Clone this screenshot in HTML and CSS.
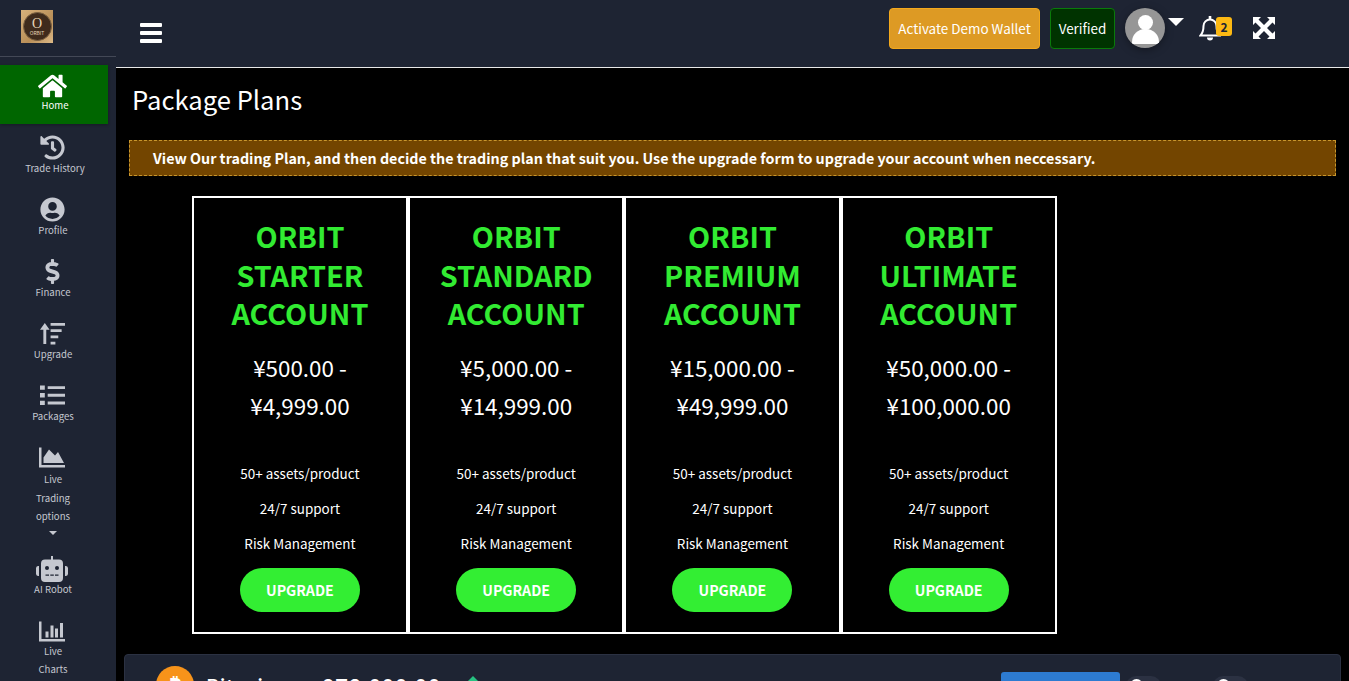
FILE: index.html
```html
<!DOCTYPE html>
<html lang="en">
<head>
<meta charset="utf-8">
<title>Package Plans</title>
<link rel="stylesheet" href="styles.css">
</head>
<body>
<div class="app">
  <aside class="sidebar">
    <div class="brand">
      <div class="logo"><div class="coin"><span class="coin-o">O</span><span class="coin-t">ORBIT</span></div></div>
    </div>
    <nav class="nav">
      <a class="nav-item active">
        <svg class="ico home" viewBox="0 0 576 512"><path fill="currentColor" d="M280.4 148.3 96 300.1V464a16 16 0 0 0 16 16l112-.3a16 16 0 0 0 16-16V368a16 16 0 0 1 16-16h64a16 16 0 0 1 16 16v95.6a16 16 0 0 0 16 16l112 .4a16 16 0 0 0 16-16V300L295.7 148.3a12.2 12.2 0 0 0-15.3 0zM571.6 251.5 488 182.600V44a12 12 0 0 0-12-12h-56a12 12 0 0 0-12 12v72.600L318.500 43a48 48 0 0 0-61 0L4.300 251.500a12 12 0 0 0-1.600 16.900l25.500 31a12 12 0 0 0 16.900 1.600l235.200-193.700a12.200 12.200 0 0 1 15.300 0L530.900 301a12 12 0 0 0 16.900-1.600l25.500-31a12 12 0 0 0-1.700-16.900z"/></svg>
        <span class="shifted">Home</span>
      </a>
      <a class="nav-item">
        <svg class="ico" viewBox="0 0 512 512"><path fill="currentColor" d="M504 255.500c.3 136.600-111.200 248.400-247.800 248.500-59 0-113.200-20.500-155.800-54.900-11.100-8.900-11.900-25.500-1.800-35.600l11.300-11.300c8.600-8.600 22.400-9.600 31.900-2C173.100 425.100 212.800 440 256 440c101.700 0 184-82.300 184-184 0-101.700-82.300-184-184-184-48.800 0-93.100 19-126.100 49.900l50.800 50.800c10.100 10.100 2.900 27.300-11.300 27.300H24c-8.800 0-16-7.200-16-16V38.600c0-14.300 17.200-21.400 27.300-11.300l49.400 49.400C129.200 34.100 189.600 8 256 8c136.700 0 247.700 110.800 248 247.500zm-180.900 78.800 9.800-12.600c8.100-10.500 6.300-25.500-4.200-33.700L288 256.300V152c0-13.300-10.700-24-24-24h-16c-13.300 0-24 10.700-24 24v135.700l65.400 50.900c10.500 8.100 25.500 6.200 33.700-4.300z"/></svg>
        <span class="shifted-sm">Trade History</span>
      </a>
      <a class="nav-item">
        <svg class="ico" viewBox="0 0 496 512"><path fill="currentColor" d="M248 8C111 8 0 119 0 256s111 248 248 248 248-111 248-248S385 8 248 8zm0 96c48.600 0 88 39.400 88 88s-39.400 88-88 88-88-39.400-88-88 39.400-88 88-88zm0 344c-58.700 0-111.300-26.600-146.500-68.200 18.800-35.400 55.600-59.800 98.500-59.800 2.400 0 4.800.4 7.100 1.100 13 4.200 26.600 6.900 40.900 6.900 14.300 0 28-2.700 40.900-6.900 2.300-.7 4.700-1.100 7.100-1.100 42.900 0 79.700 24.400 98.500 59.800C359.300 421.400 306.700 448 248 448z"/></svg>
        <span>Profile</span>
      </a>
      <a class="nav-item">
        <svg class="ico" viewBox="0 0 288 512"><path fill="currentColor" d="M209.200 233.400l-108-31.600C88.700 198.200 80 186.500 80 173.500c0-16.300 13.200-29.500 29.500-29.500h66.300c12.200 0 24.200 3.700 34.200 10.500 6.100 4.100 14.300 3.100 19.500-2l34.800-34c7.100-6.900 6.100-18.400-1.800-24.500C238 74.800 207.400 64.100 176 64V16c0-8.800-7.200-16-16-16h-32c-8.800 0-16 7.200-16 16v48h-2.500C45.800 64-5.400 118.700.5 183.600c4.200 46.100 39.400 83.600 83.800 96.600l102.500 30c12.500 3.700 21.200 15.300 21.200 28.300 0 16.300-13.200 29.500-29.500 29.500h-66.300C100 368 88 364.300 78 357.500c-6.100-4.100-14.300-3.100-19.500 2l-34.800 34c-7.100 6.900-6.100 18.400 1.800 24.500 24.500 19.200 55.100 29.900 86.500 30v48c0 8.800 7.200 16 16 16h32c8.800 0 16-7.200 16-16v-48.200c46.600-.9 90.300-28.600 105.700-72.700 21.500-61.600-14.600-124.800-72.500-141.700z"/></svg>
        <span>Finance</span>
      </a>
      <a class="nav-item">
        <svg class="ico" viewBox="0 0 26 24"><path fill="currentColor" d="M5 1 0 8h3.500v15h3V8H10zM11 1h15v3H11zM11 7.500h11.500v3H11zM11 14h8v3h-8zM11 20.500h5v3h-5z"/></svg>
        <span>Upgrade</span>
      </a>
      <a class="nav-item">
        <svg class="ico" viewBox="0 0 26 21"><path fill="currentColor" d="M0 0h5v4.500H0zM8 .8h18v3H8zM0 8h5v4.500H0zM8 8.800h18v3H8zM0 16h5v4.500H0zM8 16.800h18v3H8z"/></svg>
        <span>Packages</span>
      </a>
      <a class="nav-item multi">
        <svg class="ico" viewBox="0 0 26 20"><path fill="currentColor" d="M0 0h2.500v17.500H26V20H0zM4.500 15.500V10L10 2l6 6 3-3.500 6 11z"/></svg>
        <span>Live</span><span>Trading</span><span>options</span>
        <i class="caret"></i>
      </a>
      <a class="nav-item robot">
        <svg class="ico" viewBox="0 0 32 26"><path fill="currentColor" d="M15 0h2v3.500h6a4 4 0 0 1 4 4V22a4 4 0 0 1-4 4H9a4 4 0 0 1-4-4V7.500a4 4 0 0 1 4-4h6zM0 12a2.500 2.500 0 0 1 3-2v10a2.500 2.500 0 0 1-3-2zM29 10a2.500 2.500 0 0 1 3 2v6a2.500 2.500 0 0 1-3 2z"/><circle cx="11" cy="12" r="2" fill="#1e2433"/><circle cx="21" cy="12" r="2" fill="#1e2433"/><path fill="#1e2433" d="M9.500 18.500h3.500v1.300H9.500zM14.300 18.500h3.500v1.300h-3.500zM19 18.500h3.500v1.300H19z"/></svg>
        <span>AI Robot</span>
      </a>
      <a class="nav-item multi charts">
        <svg class="ico" viewBox="0 0 26 20"><path fill="currentColor" d="M0 0h2.500v17.500H26V20H0zM6.500 10h3v6h-3zM11.500 4h3v12h-3zM16 7h3v9h-3zM21 1.500h3V16h-3z"/></svg>
        <span>Live</span><span>Charts</span>
      </a>
    </nav>
  </aside>
  <div class="main">
    <header class="topbar">
      <div class="burger"><b></b><b></b><b></b></div>
      <div class="top-actions">
        <a class="btn-demo">Activate Demo Wallet</a>
        <a class="btn-verified">Verified</a>
        <div class="avatar"><i class="av-head"></i><i class="av-body"></i></div>
        <i class="av-caret"></i>
        <div class="bell">
          <svg viewBox="0 0 22 25"><path fill="none" stroke="#fff" stroke-width="2" d="M11 3.500a6.500 6.500 0 0 0-6.500 6.500c0 5.500-1.300 7.500-3 9.500h19c-1.700-2-3-4-3-9.500A6.500 6.500 0 0 0 11 3.500z"/><path fill="#fff" d="M9.700 0h2.600v3H9.700zM8 21.500h6a3 3 0 0 1-6 0z"/></svg>
          <span class="badge">2</span>
        </div>
        <svg class="expand" viewBox="0 0 22 22"><path fill="#fff" d="M0 0h8L5.500 2.500 11 8l5.500-5.500L14 0h8v8l-2.500-2.500L14 11l5.500 5.500L22 14v8h-8l2.500-2.500L11 14l-5.500 5.500L8 22H0v-8l2.500 2.500L8 11 2.500 5.500 0 8z"/></svg>
      </div>
    </header>
    <main class="content">
      <h1 class="page-title">Package Plans</h1>
      <div class="notice">View Our trading Plan, and then decide the trading plan that suit you. Use the upgrade form to upgrade your account when neccessary.</div>
      <section class="plans">
        <article class="plan">
          <h2>ORBIT STARTER ACCOUNT</h2>
          <p class="price">¥500.00 - ¥4,999.00</p>
          <ul><li>50+ assets/product</li><li>24/7 support</li><li>Risk Management</li></ul>
          <a class="upgrade">UPGRADE</a>
        </article>
        <article class="plan">
          <h2>ORBIT STANDARD ACCOUNT</h2>
          <p class="price">¥5,000.00 - ¥14,999.00</p>
          <ul><li>50+ assets/product</li><li>24/7 support</li><li>Risk Management</li></ul>
          <a class="upgrade">UPGRADE</a>
        </article>
        <article class="plan">
          <h2>ORBIT PREMIUM ACCOUNT</h2>
          <p class="price">¥15,000.00 - ¥49,999.00</p>
          <ul><li>50+ assets/product</li><li>24/7 support</li><li>Risk Management</li></ul>
          <a class="upgrade">UPGRADE</a>
        </article>
        <article class="plan">
          <h2>ORBIT ULTIMATE ACCOUNT</h2>
          <p class="price">¥50,000.00 - ¥100,000.00</p>
          <ul><li>50+ assets/product</li><li>24/7 support</li><li>Risk Management</li></ul>
          <a class="upgrade">UPGRADE</a>
        </article>
      </section>
      <section class="ticker">
        <div class="btc"><span>₿</span></div>
        <div class="coin-name">Bitcoin</div>
        <div class="coin-price">978,000.00</div>
        <i class="up"></i>
        <div class="ticker-right">
          <a class="blue-btn"></a>
          <i class="toggle"></i>
          <i class="toggle"></i>
        </div>
      </section>
    </main>
  </div>
</div>
</body>
</html>
```
FILE: styles.css
```css
* { box-sizing: border-box; }
html, body { margin: 0; height: 100%; overflow: hidden; background: #000; }
body { font-family: "Noto Sans CJK SC", "Noto Sans", sans-serif; color: #fff; }
.app { display: flex; height: 681px; overflow: hidden; }
.sidebar { width: 116px; flex: none; background: #1e2433; overflow: hidden; }
.brand { height: 57px; border-bottom: 1px solid #434856; padding: 10px 0 0 21px; }
.logo { width: 32px; height: 33px; background: linear-gradient(135deg, #d8b27c, #b98f58 60%, #dcb987); display: flex; align-items: center; justify-content: center; }
.coin { width: 29px; height: 29px; border-radius: 50%; background: #3f2b1c; border: 1px solid #7b6142; display: flex; flex-direction: column; align-items: center; justify-content: center; color: #e6d6b8; }
.coin-o { font: 400 14px/12px "Liberation Serif", serif; }
.coin-t { font-size: 5px; line-height: 6px; }
.nav { display: flex; flex-direction: column; padding-top: 8px; }
.nav-item { width: 108px; display: flex; flex-direction: column; align-items: center; color: #c5c8d0; font-size: 9.600px; line-height: 14px; padding: 7px 2px 0 0; height: 62px; }
.nav-item .ico { width: 25px; height: 25px; margin: 0 2px 1px 0; }
.shifted { margin-left: 6px; }
.shifted-sm { margin-left: 4px; }
.nav-item.active { background: #006600; color: #fff; height: 59px; padding: 8px 4px 0 0; margin-bottom: 4px; box-shadow: 0 1px 3px rgba(0,0,0,.3); }
.nav-item.active .ico { width: 29px; height: 26px; margin: 0 0 -1px 0; }
.nav-item.multi { height: auto; padding-top: 9px; }
.nav-item.multi .ico { width: 26px; height: 21px; margin-bottom: 2px; }
.nav-item.multi span { line-height: 18.500px; }
.caret { width: 0; height: 0; border: 4px solid transparent; border-top: 4px solid #c5c8d0; border-bottom: 0; margin-top: 5px; }
.nav-item.robot { margin-top: 21px; height: 60px; padding-top: 0; }
.nav-item.robot .ico { width: 32px; height: 26px; margin: 0 2px 0 0; }
.nav-item.charts { padding-top: 5px; }
.nav-item.charts .ico { margin-bottom: 0; }
.main { flex: 1; min-width: 0; display: flex; flex-direction: column; }
.topbar { height: 68px; flex: none; background: #1e2433; border-bottom: 1px solid #e8e8e8; display: flex; align-items: center; padding: 0 74px 0 24px; justify-content: space-between; }
.burger { display: flex; flex-direction: column; gap: 4px; width: 22px; margin-top: -1px; }
.burger b { height: 4px; background: #fff; border-radius: 1px; }
.top-actions { display: flex; align-items: center; margin-top: -11px; }
.btn-demo { width: 151px; height: 41px; background: #dd9a24; border: 1px solid #f4a91c; border-radius: 4px; font-size: 13.440px; display: flex; align-items: center; justify-content: center; }
.btn-verified { width: 65px; height: 41px; margin-left: 10px; background: #003300; border: 1px solid #0a7a0a; border-radius: 4px; font-size: 13.440px; display: flex; align-items: center; justify-content: center; }
.avatar { width: 40px; height: 40px; margin-left: 10px; border-radius: 50%; background: #969696; position: relative; overflow: hidden; box-shadow: 0 2px 8px rgba(0,0,0,.35); }
.av-head { position: absolute; left: 13px; top: 7px; width: 15px; height: 15px; border-radius: 50%; background: #fff; }
.av-body { position: absolute; left: 7px; top: 21px; width: 27px; height: 15px; border-radius: 13px 13px 0 0; background: #fff; }
.av-caret { width: 0; height: 0; border: 8px solid transparent; border-top: 8px solid #fff; border-bottom: 0; margin: -12px 0 0 3px; }
.bell { position: relative; width: 22px; height: 25px; margin-left: 15px; }
.bell svg { width: 22px; height: 25px; display: block; }
.badge { position: absolute; left: 17px; top: 1px; width: 16px; height: 19px; background: #fdb913; border-radius: 3px; color: #1e2433; font-size: 12px; font-weight: 700; line-height: 19px; text-align: center; }
.expand { width: 22px; height: 22px; margin-left: 32px; }
.content { flex: 1; min-height: 0; padding: 0 8px 0 8px; }
.page-title { margin: 13px 0 0 8px; font-size: 25.600px; font-weight: 400; line-height: 36px; height: 41px; }
.notice { margin: 18px 5px 0 5px; height: 36px; background: #734500; border: 1px dashed #c8962c; font-size: 14.300px; font-weight: 700; line-height: 34px; padding-left: 23px; white-space: nowrap; }
.plans { display: flex; margin: 20px 0 0 67.800px; }
.plan { width: 216.250px; height: 438px; border: 2px solid #fff; background: #000; text-align: center; padding: 19px 30px 0; }
.plan h2 { margin: 0 -15px; font-size: 28.800px; font-weight: 700; line-height: 38.500px; color: #32eb32; }
.price { margin: 15px -15px 0; font-size: 22.400px; line-height: 38px; padding: 0 20px; height: 76px; }
.plan ul { list-style: none; margin: 32px 0 0; padding: 0; font-size: 13.440px; line-height: 35px; }
.upgrade { display: flex; align-items: center; justify-content: center; width: 120px; height: 44px; margin: 7px auto 0; background: #33ee33; border-radius: 22px; font-size: 14.200px; font-weight: 700; }
.ticker { margin: 20px 0 0; height: 80px; background: #1e2433; border: 1px solid #2b3142; border-radius: 4px; display: flex; align-items: flex-start; padding: 11px 0 0 31px; }
.btc { width: 38px; height: 38px; border-radius: 50%; background: #f7931a; font-size: 24px; font-weight: 700; line-height: 38px; text-align: center; flex: none; }
.coin-name { margin: 5px 0 0 12px; font-size: 20px; line-height: 30px; font-weight: 500; width: 116px; letter-spacing: .5px; }
.coin-price { margin-top: 5px; font-size: 23px; line-height: 30px; font-weight: 500; width: 146px; }
.up { width: 0; height: 0; border: 5px solid transparent; border-bottom: 5px solid #26c281; border-top: 0; margin-top: 10px; }
.ticker-right { margin-left: auto; display: flex; align-items: flex-start; padding-top: 6px; padding-right: 92px; }
.blue-btn { width: 119px; height: 40px; background: #2d7bd1; border-radius: 3px 3px 0 0; }
.toggle { width: 35px; height: 20px; margin: 4px 0 0 6px; border-radius: 10px; background: #2b3142; position: relative; }
.toggle + .toggle { margin-left: 52px; }
.toggle::before { content: ""; position: absolute; left: 4px; top: 3px; width: 13px; height: 13px; border-radius: 50%; background: #fff; }
```
